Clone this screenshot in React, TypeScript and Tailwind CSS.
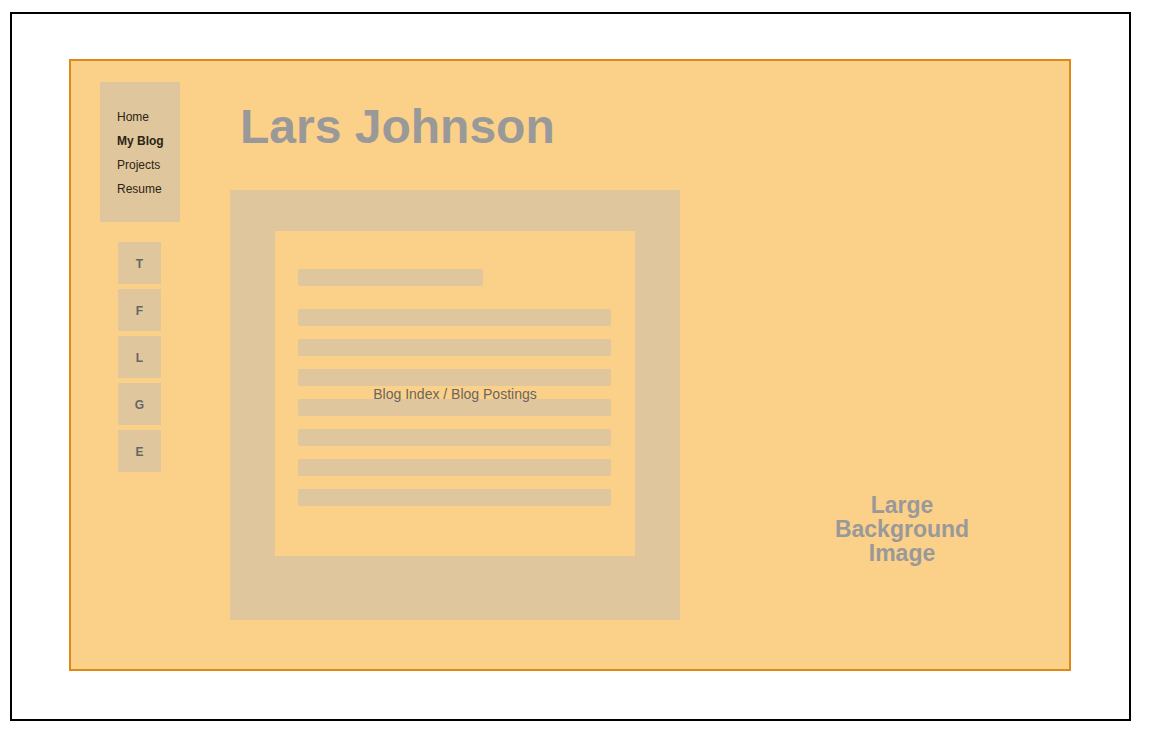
import React from 'react';

const navItems = [
  { label: 'Home', active: false },
  { label: 'My Blog', active: true },
  { label: 'Projects', active: false },
  { label: 'Resume', active: false },
];

const socials = ['T', 'F', 'L', 'G', 'E'];

const App: React.FC = () => {
  return (
    <div className="bg-white w-[1150px] h-[740px] pt-[12px] pl-[10px] font-['Liberation_Sans',Arial,sans-serif]">
      <div className="w-[1121px] h-[709px] border-2 border-black pl-[57px] pt-[45px]">
        {/* wireframe canvas */}
        <div className="w-[1002px] h-[612px] bg-[#fbd089] border-2 border-[#dd8a16] flex pl-[29px] pt-[21px]">
          {/* left column: nav + social */}
          <div className="w-[80px] flex flex-col">
            <div className="bg-[#e0c69c] h-[140px] pl-[17px] pt-[23px] text-[12px] leading-[24px] text-[#2a2414]">
              {navItems.map((item) => (
                <div key={item.label} className={item.active ? 'font-bold' : ''}>
                  {item.label}
                </div>
              ))}
            </div>
            <div className="flex flex-col gap-[5px] mt-[20px] pl-[18px]">
              {socials.map((s) => (
                <div
                  key={s}
                  className="w-[43px] h-[42px] bg-[#e0c69c] flex items-center justify-center pt-[1px] text-[12px] font-bold text-[#666]"
                >
                  {s}
                </div>
              ))}
            </div>
          </div>

          {/* main column */}
          <div className="ml-[50px] w-[450px] flex flex-col">
            <h1 className="text-[48px] leading-[48px] font-bold text-[#999] pl-[10px] mt-[21px]">
              Lars Johnson
            </h1>
            <div className="mt-[39px] w-[450px] h-[430px] bg-[#e0c69c] pl-[45px] pt-[41px]">
              <div className="relative w-[360px] h-[325px] bg-[#fbd089] pl-[23px] pt-[38px]">
                <div className="w-[185px] h-[17px] bg-[#e0c69c] rounded-[2px]" />
                <div className="flex flex-col gap-[13px] mt-[23px]">
                  {[0, 1, 2, 3, 4, 5, 6].map((i) => (
                    <div key={i} className="w-[313px] h-[17px] bg-[#e0c69c] rounded-[2px]" />
                  ))}
                </div>
                <div className="absolute inset-0 flex items-center justify-center pt-[1px] text-[14px] text-[#666]">
                  Blog Index / Blog Postings
                </div>
              </div>
            </div>
          </div>

          {/* right area */}
          <div className="flex-1">
            <div className="ml-[122px] mt-[411px] w-[200px] text-center text-[23px] leading-[24px] font-bold text-[#999]">
              Large
              <br />
              Background
              <br />
              Image
            </div>
          </div>
        </div>
      </div>
    </div>
  );
};

export default App;
